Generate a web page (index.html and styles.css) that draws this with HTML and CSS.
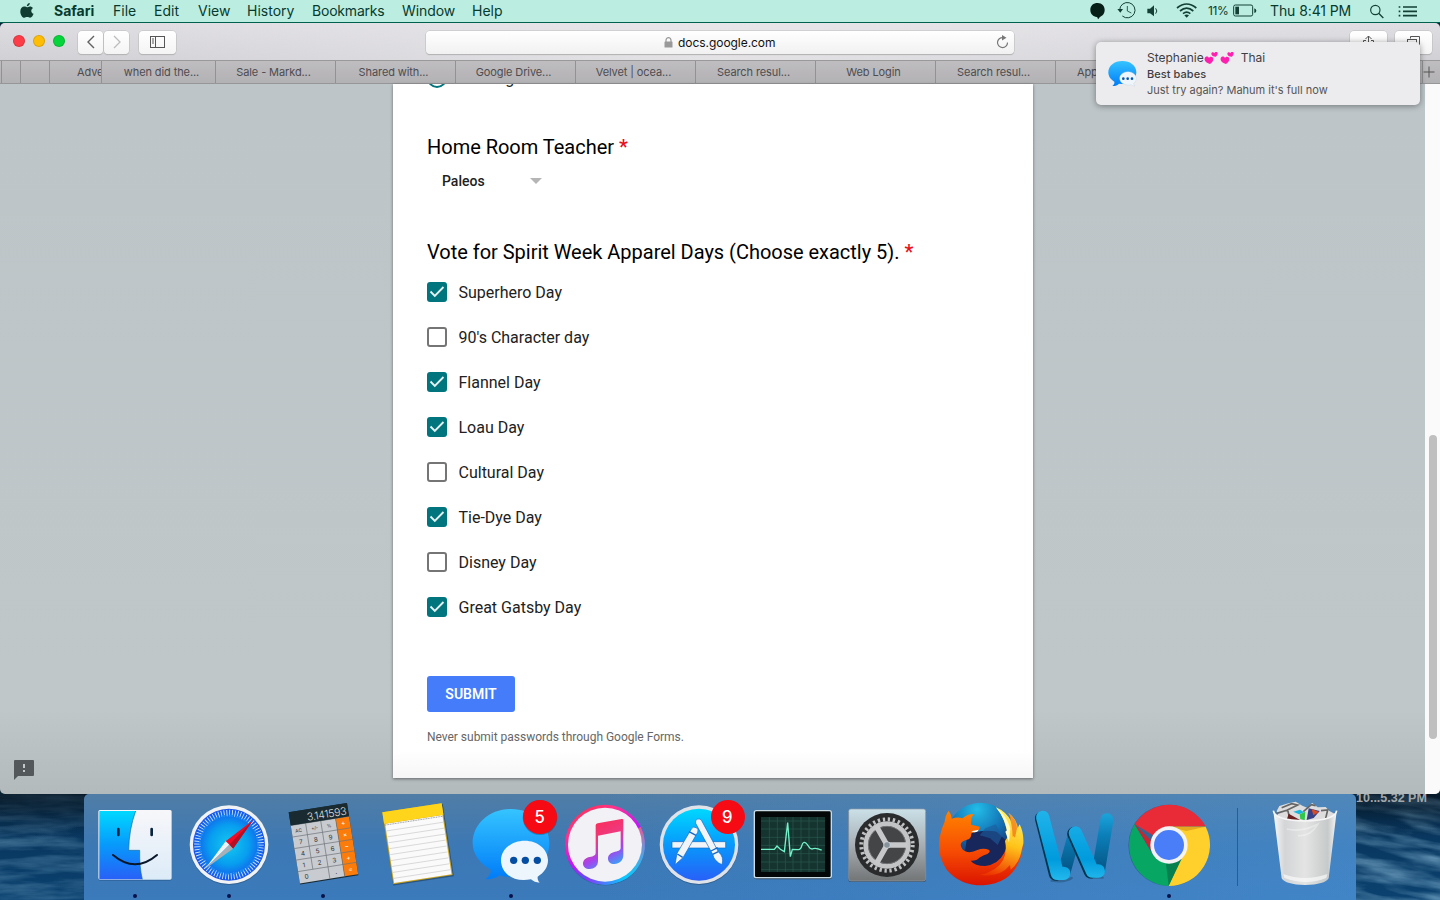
FILE: index.html
```html
<!DOCTYPE html>
<html lang="en">
<head>
<meta charset="utf-8">
<title>Desktop</title>
<link rel="stylesheet" href="styles.css">
</head>
<body>
<header class="menubar">
  <svg class="apple" width="14" height="18" viewBox="0 0 14 18"><path d="M9.8 1c.1 1.600-1.300 3.300-3 3.300C6.700 2.700 8.200 1.200 9.800 1zM7 5.200c.7 0 1.600-.8 2.900-.8 1.300 0 2.400.6 3.100 1.500-2.500 1.500-2.200 4.900.6 5.900-.6 1.700-2 4-3.500 4-1.100 0-1.500-.7-2.900-.7s-1.800.7-2.900.7C2.300 15.800.3 12.500.3 9.400c0-3.200 2-4.900 4-4.900 1.300 0 2 .7 2.700.7z"/></svg>
  <nav class="menus">
    <span class="m-safari">Safari</span><span class="m-file">File</span><span class="m-edit">Edit</span><span class="m-view">View</span><span class="m-history">History</span><span class="m-bookmarks">Bookmarks</span><span class="m-window">Window</span><span class="m-help">Help</span>
  </nav>
  <div class="status">
    <svg class="status-icons" width="120" height="22" viewBox="0 0 360 66">
      <path fill="#061f17" d="M47 9c13 0 21 9 21 21 0 11-7 18-13 20-3 2-4 5-7 8-1-3-1-6-4-7-10-2-19-8-19-21S34 9 47 9z"/>
      <g fill="none" stroke="#143f34" stroke-width="3"><path d="M113 30a23 23 0 1 1 8 18"/><path d="M136 18v15l12 6" stroke-width="2.500"/></g>
      <path fill="#143f34" d="M106 27h17l-8 11zM196 26h8l12-10v33l-12-9h-8z"/>
      <path fill="none" stroke="#143f34" stroke-width="3" d="M221 25q7 8 0 16"/>
      <g fill="none" stroke="#143f34" stroke-width="5"><path d="M285 24q29-24 58 0M294 33q20-17 40 0M303 41q11-9 22 0"/></g><path fill="#143f34" d="M307 46q7-5 14 0l-7 7z"/>
    </svg>
    <span class="percent">11%</span>
    <svg width="24" height="14" viewBox="0 0 72 42"><rect x="2" y="3" width="57" height="33" rx="5" fill="none" stroke="#143f34" stroke-width="3"/><rect x="7" y="8" width="11" height="23" fill="#143f34"/><path d="M64 13q6 2 6 7t-6 7z" fill="#143f34"/></svg>
    <span class="clock">Thu 8:41 PM</span>
    <svg class="tail" width="52" height="20" viewBox="0 0 156 60" fill="none" stroke="#143f34" stroke-width="3.500"><circle cx="19" cy="27" r="14"/><path d="M29 37l14 14" stroke-width="4"/><path d="M102 18h42M102 31h42M102 44h42" stroke-width="5"/><path d="M89 18h5M89 31h5M89 44h5" stroke-width="5"/></svg>
  </div>
</header>

<section class="window">
  <div class="toolbar">
    <i class="light red"></i><i class="light yellow"></i><i class="light green"></i>
    <div class="nav">
      <b><svg width="10" height="14" viewBox="0 0 10 14"><path d="M8 1L2 7l6 6" fill="none" stroke="#606060" stroke-width="1.400"/></svg></b>
      <b><svg width="10" height="14" viewBox="0 0 10 14"><path d="M2 1l6 6-6 6" fill="none" stroke="#bcbcbc" stroke-width="1.300"/></svg></b>
    </div>
    <div class="btn sidebar"><svg width="16" height="13" viewBox="0 0 16 13" fill="none" stroke="#565656"><rect x=".5" y=".5" width="14" height="11"/><path d="M5.500.5v11M2 3h2M2 5h2M2 7h2"/></svg></div>
    <div class="address">
      <svg class="lock" width="9" height="11" viewBox="0 0 9 11"><rect x=".5" y="4.500" width="8" height="6" rx=".6" fill="#999"/><path d="M2 5V3.200a2.500 2.500 0 0 1 5 0V5" fill="none" stroke="#999" stroke-width="1.200"/></svg>
      <span>docs.google.com</span>
      <svg class="reload" width="13" height="14" viewBox="0 0 13 14"><path d="M7 2.600a5 5 0 1 0 4.500 4.900" fill="none" stroke="#777" stroke-width="1.200"/><path d="M6 0l4.500 2.700L6 5.500z" fill="#777"/></svg>
    </div>
    <div class="btn share"><svg width="14" height="15" viewBox="0 0 14 15" fill="none" stroke="#555"><path d="M4 5.500H1.500v9h10v-9H9M6.500 10V1M3.500 4l3-3 3 3"/></svg></div>
    <div class="btn all-tabs"><svg width="14" height="12" viewBox="0 0 14 12" fill="none" stroke="#555"><path d="M3.500 2.500v-2h9v8h-2"/><rect x=".5" y="3.500" width="9" height="8"/></svg></div>
  </div>
  <div class="tabs">
    <span class="t0"></span><span class="t1"></span><span class="t2"></span><span class="t3">Adve</span><span class="t4">when did the...</span><span>Sale - Markd...</span><span>Shared with...</span><span>Google Drive...</span><span>Velvet | ocea...</span><span>Search resul...</span><span>Web Login</span><span>Search resul...</span><span class="last">App</span><span class="plus"><svg width="12" height="12" viewBox="0 0 12 12"><path d="M6 .5v11M.5 6h11" stroke="#555" stroke-width="1"/></svg></span>
  </div>
  <main class="page">
    <div class="left">
      <svg width="20" height="20" viewBox="0 0 20 20"><path d="M1 0h18q1 0 1 1v14q0 1-1 1H4l-4 4V1q0-1 1-1z" fill="#53585a"/><path d="M9 4h2v4H9zm0 6h2v2H9z" fill="#c2c8ca"/></svg>
    </div>
    <form class="card">
      <div class="clipped"><svg width="20" height="20" viewBox="0 0 20 20"><circle cx="10" cy="10" r="9" fill="none" stroke="#00757d" stroke-width="2"/></svg><span>Although</span></div>
      <h2 class="q1">Home Room Teacher <em>*</em></h2>
      <div class="select">Paleos<i></i></div>
      <h2 class="q2">Vote for Spirit Week Apparel Days (Choose exactly 5). <em>*</em></h2>
      <div class="options">
        <label><i class="box on"><svg width="20" height="20" viewBox="0 0 20 20"><path d="M3.500 9.500l4.300 4.500L16.500 5" fill="none" stroke="#e4f1f2" stroke-width="1.900"/></svg></i><span>Superhero Day</span></label>
        <label><i class="box"></i><span>90's Character day</span></label>
        <label><i class="box on"><svg width="20" height="20" viewBox="0 0 20 20"><path d="M3.500 9.500l4.300 4.500L16.500 5" fill="none" stroke="#e4f1f2" stroke-width="1.900"/></svg></i><span>Flannel Day</span></label>
        <label><i class="box on"><svg width="20" height="20" viewBox="0 0 20 20"><path d="M3.500 9.500l4.300 4.500L16.500 5" fill="none" stroke="#e4f1f2" stroke-width="1.900"/></svg></i><span>Loau Day</span></label>
        <label><i class="box"></i><span>Cultural Day</span></label>
        <label><i class="box on"><svg width="20" height="20" viewBox="0 0 20 20"><path d="M3.500 9.500l4.300 4.500L16.500 5" fill="none" stroke="#e4f1f2" stroke-width="1.900"/></svg></i><span>Tie-Dye Day</span></label>
        <label><i class="box"></i><span>Disney Day</span></label>
        <label><i class="box on"><svg width="20" height="20" viewBox="0 0 20 20"><path d="M3.500 9.500l4.300 4.500L16.500 5" fill="none" stroke="#e4f1f2" stroke-width="1.900"/></svg></i><span>Great Gatsby Day</span></label>
      </div>
      <button type="button" class="submit">SUBMIT</button>
      <p class="note">Never submit passwords through Google Forms.</p>
    </form>
    <div class="scroll"><i></i></div>
  </main>
</section>

<aside class="toast">
  <svg class="toast-icon" width="30" height="28" viewBox="0 0 90 84">
    <defs><linearGradient id="msg" x1="0" y1="0" x2="0" y2="1"><stop offset="0" stop-color="#35c4ff"/><stop offset="1" stop-color="#007cf8"/></linearGradient></defs>
    <path fill="url(#msg)" d="M43 3c24 0 42 14 42 34S67 72 43 72l-10-1c-5 5-13 8-20 7 5-4 7-8 6-13C8 59 1 49 1 37 1 17 19 3 43 3z"/>
    <path fill="#eef6fc" stroke="#b9cfe0" d="M60 35c14 0 25 9 25 20 0 7-3 12-8 15 0 4 2 7 4 8-4 0-9-1-12-4-20 4-34-6-34-19 0-11 11-20 25-20z"/><g fill="#0a57a8"><circle cx="46" cy="56" r="4"/><circle cx="59" cy="56" r="4"/><circle cx="72" cy="56" r="4"/></g>
  </svg>
  <div class="toast-text">
    <div class="who"><span>Stephanie</span><svg width="31" height="14" viewBox="0 0 93 42"><g id="hearts" fill="#ff1fae"><path d="M18 39C8 36 0 30 2 22c2-7 10-7 13-1 3-6 12-5 13 2 1 6-5 12-10 16z"/><path d="M36 17c-8 0-14-4-14-9 1-5 7-5 9-1 1-5 9-6 10-1 0 4-2 8-5 11z"/></g><use href="#hearts" x="48"/></svg><span class="thai">Thai</span></div>
    <div class="group">Best babes</div>
    <div class="body">Just try again? Mahum it's full now</div>
  </div>
</aside>

<footer class="desktop">
  <svg class="sea" width="1440" height="106" viewBox="0 0 1440 106">
    <defs>
      <filter id="waves" x="0" y="0" width="1" height="1"><feTurbulence type="fractalNoise" baseFrequency=".014 .09" numOctaves="4" seed="8"/><feColorMatrix values="0 0 0 0 .25  0 0 0 0 .48  0 0 0 0 .67  1.700 0 0 0 -.6"/></filter>
      <linearGradient id="deep" x1="0" y1="0" x2="0" y2="1"><stop offset="0" stop-color="#0a2438"/><stop offset=".25" stop-color="#08345a"/><stop offset="1" stop-color="#0b4270"/></linearGradient>
      <linearGradient id="shade" x1="0" y1="0" x2="0" y2="1"><stop offset="0" stop-color="#041422" stop-opacity=".7"/><stop offset=".4" stop-color="#041422" stop-opacity="0"/></linearGradient>
    </defs>
    <rect width="1440" height="106" fill="url(#deep)"/><rect width="84" height="106" filter="url(#waves)" opacity=".5"/><g transform="rotate(9 1400 50)"><rect x="1340" y="-25" width="130" height="165" filter="url(#waves)" opacity=".8"/></g><rect width="1440" height="106" fill="url(#shade)"/>
  </svg>
  <span class="filename">10...5.32 PM</span>
  <div class="dock">
    <svg viewBox="24 27 282 318"><defs><linearGradient id="f1" x1="0" y1="0" x2="0" y2="1"><stop offset="0" stop-color="#00d8ff"/><stop offset=".5" stop-color="#0799fb"/><stop offset="1" stop-color="#2860f7"/></linearGradient><linearGradient id="f2" x1="0" y1="0" x2="0" y2="1"><stop offset="0" stop-color="#f7f7fa"/><stop offset="1" stop-color="#dcebf8"/></linearGradient></defs>
      <rect x="55" y="78" width="220" height="209" rx="6" fill="#234d76" opacity=".5"/><rect x="55" y="75" width="220" height="209" rx="5" fill="url(#f2)"/><path fill="url(#f1)" d="M58 78H167Q147 133 146 196H179Q178 246 187 283H58z"/><path d="M167 78Q147 133 146 196H179Q178 246 187 283" fill="none" stroke="#176ba5" stroke-width="2"/><path d="M115 132v18M215 132v18" stroke="#07233d" stroke-width="8" stroke-linecap="round"/><path d="M99 210q66 56 132 0" fill="none" stroke="#08172a" stroke-width="6" stroke-linecap="round"/><circle cx="165" cy="333" r="6" fill="#08114a"/></svg>
    <svg viewBox="306 27 282 318"><defs><radialGradient id="s1"><stop offset="0" stop-color="#14c8ef"/><stop offset=".55" stop-color="#079eef"/><stop offset="1" stop-color="#1752ec"/></radialGradient></defs>
      <circle cx="447" cy="182" r="118" fill="#254c73" opacity=".5"/><circle cx="447" cy="179" r="118" fill="#f1f2f3"/><circle cx="447" cy="179" r="108" fill="url(#s1)"/><circle cx="447" cy="179" r="95" fill="none" stroke="#cfeaff" stroke-width="19" stroke-dasharray="2.500 5.790"/><circle cx="447" cy="179" r="87" fill="none" stroke="#1687ee" stroke-width="5" stroke-dasharray="11 11.780"/>
      <path fill="#f00c24" d="M519 106l-82 63 11 10 11 12z"/><path fill="#b80e25" d="M519 106l-71 73 11 12z"/><path fill="#f0f1f4" d="M375 252l62-83 11 10z"/><path fill="#a9afb6" d="M375 252l73-73 11 12z"/><circle cx="447" cy="333" r="6" fill="#08114a"/></svg>
    <svg viewBox="588 27 282 318"><g transform="translate(626 82) rotate(-9)"><path d="M0 0h177v219H0z" fill="#172a35"/><path d="M0 40h136v176H0z" fill="#c8cbd0"/><path d="M136 40h41v176h-41z" fill="#fb7c0a"/><path d="M0 40h177M0 75h177M0 110h177M0 145h177M0 180h177M45 40v140M91 40v176M136 40v176" stroke="#6e747a" stroke-width="2"/><path d="M0 0h177v40H0z" fill="#192b31"/><g class="keys"><text x="171" y="34" class="pi">3.141593</text><text x="11" y="64" class="ac">AC</text><text x="59" y="64" class="ac">+/-</text><text x="106" y="64" class="ac">%</text><text x="17" y="100">7</text><text x="62" y="100">8</text><text x="107" y="100">9</text><text x="17" y="135">4</text><text x="62" y="135">5</text><text x="107" y="135">6</text><text x="17" y="170">1</text><text x="62" y="170">2</text><text x="107" y="170">3</text><text x="17" y="205">0</text><text x="110" y="205">.</text><g fill="#fff"><text x="150" y="64">÷</text><text x="150" y="99">×</text><text x="150" y="134">−</text><text x="150" y="169">+</text><text x="150" y="204">=</text></g></g></g><circle cx="729" cy="333" r="6" fill="#08114a"/></svg>
    <svg viewBox="0 27 282 318"><g transform="translate(37 82) rotate(-8.700)"><path d="M2 3h181v219H-1z" fill="#233c55" opacity=".6"/><path d="M0 0h180v218H0z" fill="#c9a526"/><path d="M3 35h174v180H3z" fill="#fafafa"/><path d="M0 0h180v35H0z" fill="#ffd51b"/><path d="M2 39h176" stroke="#777" stroke-width="2" stroke-dasharray="3 2"/><path d="M4 57h172M4 75h172M4 93h172M4 111h172M4 129h172M4 147h172M4 165h172M4 183h172M4 201h172" stroke="#cacaca" stroke-width="2"/></g></svg>
    <svg viewBox="282 27 282 318"><path fill="url(#msg)" d="M423 72c65 0 115 45 115 102s-50 102-115 102c-13 0-25-2-35-5-11 9-24 13-41 11 11-9 18-18 14-29-32-17-53-47-53-79 0-57 50-102 115-102z"/><path fill="#edf6fc" d="M464 167c39 0 70 26 70 59 0 20-12 38-31 49-1 8 2 13 6 18-10 0-20-4-26-10-53 11-90-18-90-57 0-33 32-59 71-59z"/><g fill="#034da2"><circle cx="431" cy="226" r="11"/><circle cx="466" cy="226" r="11"/><circle cx="502" cy="226" r="11"/></g><circle cx="510" cy="98" r="52" fill="#18324e" opacity=".35"/><circle cx="510" cy="96" r="51" fill="#f60a13"/><text x="509" y="115" class="badge">5</text><circle cx="423" cy="333" r="6" fill="#08114a"/></svg>
    <svg viewBox="564 27 282 318"><defs><linearGradient id="i1" x1=".1" y1="0" x2=".7" y2="1"><stop offset="0" stop-color="#ff3040"/><stop offset=".25" stop-color="#ff328b"/><stop offset=".55" stop-color="#c714fc"/><stop offset=".78" stop-color="#455bf5"/><stop offset="1" stop-color="#03cfff"/></linearGradient><linearGradient id="i2" x1=".3" y1="0" x2=".7" y2="1"><stop offset="0" stop-color="#fc2c54"/><stop offset=".4" stop-color="#ee397f"/><stop offset=".7" stop-color="#a544ed"/><stop offset="1" stop-color="#2dabfa"/></linearGradient><linearGradient id="i4" x1="0" y1="0" x2="0" y2="1"><stop offset="0" stop-color="#e85b90"/><stop offset=".35" stop-color="#7c8fd0"/><stop offset="1" stop-color="#05caff"/></linearGradient><linearGradient id="i5" x1="0" y1="0" x2="1" y2="0"><stop offset="0" stop-color="#8a35fa"/><stop offset="1" stop-color="#05caff"/></linearGradient></defs><circle cx="705" cy="182" r="119" fill="#284a6e" opacity=".5"/><circle cx="705" cy="179" r="120" fill="url(#i1)"/><path d="M808 128A115 115 0 0 1 762 279" fill="none" stroke="url(#i4)" stroke-width="10"/><path d="M763 278A115 115 0 0 1 648 279" fill="none" stroke="url(#i5)" stroke-width="10"/><circle cx="705" cy="179" r="111" fill="#f2f1f5"/><path fill="url(#i2)" d="M677 121q0-5 6-6l72-13q5-1 5 4v104c0 16-12 27-27 27-12 0-19-7-19-16 0-12 9-18 21-21 13-3 17-5 17-12v-49l-68 13v76c0 16-12 24-25 24-12 0-20-7-20-16 0-11 9-18 20-20 12-2 18-5 18-12z"/></svg>
    <svg viewBox="6 27 282 318"><circle cx="147" cy="182" r="118" fill="#25486c" opacity=".5"/><circle cx="147" cy="179" r="118" fill="#dfe3e9"/><circle cx="147" cy="179" r="108" fill="url(#f1)"/><g fill="#f2f5f8" stroke="#1468c5" stroke-width="2"><path d="M66 170h161v19H66z"/><path d="M124 132q5-9 15-4 8 5 4 14l-44 76-24 21 6-34z"/><path d="M137 115q-3-10 6-13 8-2 12 5l50 93q18 16 11 39-23-9-28-31z"/><path d="M117 140l21 11M82 207l16 10M183 198l20-10M188 208l17-8" fill="none" stroke-width="4"/></g><circle cx="234" cy="96" r="51" fill="#f60a13"/><text x="232" y="115" class="badge">9</text></svg>
    <svg viewBox="288 27 282 318"><rect x="312" y="77" width="234" height="206" rx="7" fill="#354b60"/><rect x="313" y="77" width="231" height="201" rx="6" fill="#030707" stroke="#cbdce5" stroke-width="4"/><rect x="333" y="96" width="192" height="165" fill="#15332f"/><path d="M358 96v165M382 96v165M406 96v165M429 96v165M453 96v165M477 96v165M502 96v165M333 108h192M333 132h192M333 157h192M333 181h192M333 206h192M333 231h192M333 254h192" stroke="#29594f" stroke-width="2"/><path d="M333 193h40l8-10 10 10 12 7 10-87 8 102 6-22 18 1c14-1 7-20 17-22 14-1 12 26 28 19 9-4 13 2 25 4" fill="none" stroke="#72f2c8" stroke-width="4"/></svg>
    <svg viewBox="570 27 282 318"><defs><linearGradient id="p1" x1="0" y1="0" x2="0" y2="1"><stop offset="0" stop-color="#cbe0e8"/><stop offset=".5" stop-color="#a8afb4"/><stop offset="1" stop-color="#737576"/></linearGradient></defs><rect x="595" y="75" width="233" height="216" rx="7" fill="#344f6b"/><rect x="596" y="72" width="231" height="216" rx="7" fill="url(#p1)" stroke="#909da7" stroke-width="2"/><circle cx="711" cy="180" r="96" fill="#292b2d"/><circle cx="711" cy="180" r="77" fill="none" stroke="#bfc1c2" stroke-width="12" stroke-dasharray="7 8.120"/><circle cx="711" cy="180" r="64" fill="#444547" stroke="#c2c4c5" stroke-width="14"/><circle cx="711" cy="180" r="56" fill="none" stroke="#858789" stroke-width="2"/><path d="M711 180h62M711 180l-33-58M711 180l-33 58" stroke="#c6c8c9" stroke-width="16"/><circle cx="711" cy="180" r="10" fill="#87939c" stroke="#e0e2e3" stroke-width="2"/></svg>
    <svg viewBox="12 27 282 318"><defs><radialGradient id="x1" cx=".45" cy=".1" r=".8"><stop offset="0" stop-color="#22bde9"/><stop offset=".55" stop-color="#126db0"/><stop offset="1" stop-color="#18245c"/></radialGradient><linearGradient id="x2" x1=".5" y1="0" x2=".5" y2="1"><stop offset="0" stop-color="#ff8300"/><stop offset=".55" stop-color="#f64b03"/><stop offset="1" stop-color="#db1301"/></linearGradient><linearGradient id="x3" x1=".5" y1="0" x2=".3" y2="1"><stop offset="0" stop-color="#fff46a"/><stop offset=".5" stop-color="#ffc31a"/><stop offset="1" stop-color="#ed3500"/></linearGradient></defs>
    <circle cx="151" cy="153" r="100" fill="url(#x1)"/><path fill="#17265b" d="M112 150Q155 132 200 140L232 170Q236 215 200 240Q140 255 105 200z"/><path fill="#1c5c9b" opacity=".6" d="M166 130l31-12 19 36-13 26-23-20-31-9z"/>
    <path fill="url(#x2)" d="M44 110Q46 90 56 77Q64 88 65 101Q82 95 98 100Q111 87 131 87Q121 101 124 119L149 125Q150 135 138 140L124 145Q124 158 116 163Q92 168 92 180Q94 196 112 201Q128 203 142 195Q160 188 176 194Q184 200 172 207Q160 210 148 218Q140 228 122 227Q134 243 166 243Q205 238 222 205Q238 175 232 120Q258 140 264 172L274 148Q286 190 266 232Q240 295 160 301Q90 302 50 254Q12 200 36 130z"/>
    <path fill="url(#x3)" d="M198 67Q228 80 243 108Q242 92 235 83Q260 102 263 129L269 118Q282 144 280 176L276 190Q270 232 242 254L240 240Q210 278 150 270Q202 258 219 226Q232 200 225 168L233 156Q229 105 198 67z"/><path fill="#fffbc3" d="M198 67Q230 92 241 130L237 172L226 140L231 136Q224 98 198 67z"/><path fill="#f05a08" opacity=".6" d="M235 84Q262 104 261 130L255 158Q250 150 248 156Q247 118 235 84z"/><path fill="#fff" d="M124 139l22-5q-5 12-22 5z"/></svg>
    <svg viewBox="294 27 282 318"><defs><linearGradient id="w1" gradientUnits="userSpaceOnUse" x1="0" y1="75" x2="0" y2="287"><stop offset="0" stop-color="#20b4ea"/><stop offset=".7" stop-color="#009bdd"/><stop offset="1" stop-color="#24b9ed"/></linearGradient><linearGradient id="w2" gradientUnits="userSpaceOnUse" x1="0" y1="85" x2="0" y2="270"><stop offset="0" stop-color="#1ba4da"/><stop offset=".35" stop-color="#0c7fb9"/><stop offset="1" stop-color="#03507f"/></linearGradient></defs><g fill="none" stroke-linecap="round" stroke-linejoin="round"><path d="M365 287q40 6 60-8M478 278h40" stroke="#234d72" stroke-width="7" opacity=".5"/><path d="M402 262L434 146M506 253L531 104" stroke="url(#w2)" stroke-width="39"/><path d="M335 100L377 267M432 146L482 260" stroke="#07354f" stroke-width="41"/><path d="M338 97L382 265H401M436 144L487 258H505" stroke="url(#w1)" stroke-width="40"/></g></svg>
    <svg viewBox="576 27 282 318"><circle cx="717" cy="181" r="122" fill="#24486c" opacity=".5"/><path fill="#e82b36" d="M717 180L614 118a123 123 0 0 1 213 6l-110 1z"/><path fill="#ffd02c" d="M717 125h110a123 123 0 0 1-112 178l45-100z"/><path fill="#08a663" d="M614 118l55 93 83 13-37 79a123 123 0 0 1-101-185z"/><path fill="#e4a91e" d="M717 125h110l-58 13z"/><path fill="#078050" d="M755 221l-39 82-8-67z"/><path fill="#c52632" d="M614 118l48 78 5-26z"/><circle cx="717" cy="180" r="56" fill="#f3f3f5"/><circle cx="717" cy="180" r="45" fill="#4a7df8"/><circle cx="717" cy="333" r="6" fill="#08114a"/></svg>
    <i class="separator"></i>
    <svg class="trash" viewBox="174 162 282 318"><defs><linearGradient id="b1"><stop offset="0" stop-color="#f8f8f8"/><stop offset=".18" stop-color="#d3d5d7"/><stop offset=".5" stop-color="#e4e4e4"/><stop offset=".86" stop-color="#c7caca"/><stop offset="1" stop-color="#f5f5f5"/></linearGradient></defs><path fill="#ddd" d="M230 213l8-15 27-8 22-5 20 12 16 7 13-16 17 14 24-1 10 11 22 12-18 24H240z"/><path d="M245 203l30-12 18 4-31 15M310 215l24-21 13 3M363 212l20-2-6 25M230 220l33-10 5 20" stroke="#666" stroke-width="5" fill="none"/><path fill="#17b5d9" d="M280 215l20-6 12 8-15 6z"/><path fill="#31c749" d="M299 223l17-8-2 26-13-4z"/><path fill="#374187" d="M326 205l33 8-18 21-21 6z"/><path fill="#db4c25" d="M335 207l22 9-17 10z"/><path fill="#6b2020" d="M266 221l34 19h-40z"/><path fill="url(#b1)" d="M220 214q13 28 95 29 80-1 95-29l-24 201q-11 19-71 20-59-1-70-20z"/><path d="M220 212q4 29 95 31 91-2 95-31" fill="none" stroke="#f6f6f6" stroke-width="5"/><path d="M260 267q45 11 93-14-22 37-59 34" stroke="#fff" opacity=".35" stroke-width="5" fill="none"/><path d="M250 402q64 24 132 0l-3 12q-60 24-126 0z" fill="#fff" opacity=".6"/></svg>
  </div>
</footer>
</body>
</html>
```

FILE: styles.css
```css
*{box-sizing:border-box}
body{margin:0;width:1440px;height:900px;overflow:hidden;display:flex;flex-direction:column;position:relative;font-family:Inter,"Liberation Sans",sans-serif;background:#0a2438}
svg{display:block;flex:none}
i{font-style:normal}
.menubar{height:23px;flex:none;display:flex;align-items:center;padding-left:20px;background:#bbeee1;border-bottom:1px solid #00614d;color:#073a2f;font-size:14px;line-height:22px;white-space:nowrap}
.apple{fill:#103c31}
.menus{display:flex;padding-left:20px;flex:none}
.menus span{flex:none}
.m-safari{width:59px;font-weight:700}
.m-file{width:41px}
.m-edit{width:44px}
.m-view{width:49px}
.m-history{width:65px}
.m-bookmarks{width:90px;letter-spacing:-.2px}
.m-window{width:70px;letter-spacing:-.1px}
.m-help{width:40px}
.status{display:flex;align-items:center;margin-left:auto;height:22px;width:358px}
.percent{width:25px;margin-left:6px;font-size:12px;letter-spacing:-.4px}
.clock{width:110px;padding-left:13px;letter-spacing:-.1px}
.tail{margin-left:2px}
.window{height:771px;flex:none;display:flex;flex-direction:column;border-radius:5px;overflow:hidden}
.toolbar{height:37px;flex:none;display:flex;align-items:center;padding:1px 7px 0 13px;background:linear-gradient(90deg,rgba(210,209,215,.4),rgba(232,230,233,.8) 50%,rgba(210,209,215,.3)),linear-gradient(#e5e3e7,#d0d0d4)}
.light{width:12px;height:12px;border-radius:50%;margin-right:8px;border:1px solid #0002;margin-top:-2px}
.red{background:#fc3d48}.yellow{background:#ffbd05}.green{background:#06d43b}
.nav{display:flex;gap:1px;margin-left:5px}
.nav b,.btn{height:23px;border-radius:4px;background:linear-gradient(#fff,#f4f4f4);box-shadow:0 0 0 .5px #bbb,0 1px 1px #aaa;display:flex;align-items:center;justify-content:center}
.nav b{width:25px}
.btn{width:37px}
.sidebar{margin-left:10px}
.address{width:588px;height:23px;margin-left:250px;border-radius:4px;background:linear-gradient(#fff,#f1f1f1);box-shadow:0 0 0 .5px #bbb,0 1px 1px #aaa;display:flex;align-items:center;padding:0 5px 0 238px;font-size:12px;line-height:24px;letter-spacing:-.05px;color:#111}
.address span{margin-left:5px;padding-top:1px}
.reload{margin-left:auto}
.share{margin-left:336px}
.all-tabs{margin-left:8px}
.tabs{height:24px;flex:none;display:flex;background:linear-gradient(#bfbdc0,#b2b1b4);border-top:1px solid #999;border-bottom:1px solid #969698;color:#4e4c50;font-size:11px;letter-spacing:-.1px;line-height:22px;white-space:nowrap}
.tabs span{width:120px;flex:none;text-align:center;border-right:1px solid #929194;overflow:hidden;padding-right:4px}
.tabs .t0{width:2px;padding:0}
.tabs .t1{width:19px}
.tabs .t2{width:29px}
.tabs .t3{width:52px;padding:0 0 0 27px;text-align:left}
.tabs .t4{width:114px;padding:0 0 0 6px}
.tabs .last{width:367px;text-align:left;padding-left:21px}
.tabs .plus{width:17px;padding:5px 0 0 0;border:0}
.page{height:710px;display:flex;background:linear-gradient(#bdc5c8,#c0c7c9 88%,#b3babc)}
.left{width:393px;flex:none;padding:676px 0 0 14px}
.card{width:640px;height:694px;flex:none;background:linear-gradient(#fff 96%,#f6f6f6);box-shadow:0 1px 3px #0007;padding-left:34px;font-family:Roboto,sans-serif;color:#212121}
.clipped{height:4px;overflow:hidden;display:flex;align-items:flex-end;font-size:16px;line-height:16px}
.clipped span{margin-left:12px;margin-bottom:1px}
.card h2{margin:0;font-size:20px;font-weight:400;line-height:26px;letter-spacing:-.02px;color:#000;white-space:nowrap}
.card em{font-style:normal;font-weight:500;color:#e8101c}
.q1{padding-top:46px}
.select{height:22px;margin-top:10px;padding-left:15px;display:flex;align-items:center;font-size:14px;font-weight:500}
.select i{margin-left:45px;border:6px solid transparent;border-top-color:#b5b5b5;border-bottom:0}
.card .q2{margin-top:47px}
.options{padding-top:17px}
.options label{display:flex;height:20px;margin-bottom:25px;align-items:center;font-size:16px;line-height:20px}
.options label span{padding-top:2px}
.box{width:20px;height:20px;border:2px solid #757575;border-radius:3px;margin-right:11.500px}
.box.on{border:0;background:#00757d}
.submit{display:block;width:88px;height:36px;margin:59px 0 0;border:0;border-radius:3px;background:#447cfa;color:#fff;font:600 14px Roboto,sans-serif;padding:0}
.note{margin:16px 0 0;font-size:12px;line-height:18px;letter-spacing:-.02px;color:#666}
.scroll{width:15px;margin-left:auto;background:#fafafa;padding:351px 3px 0 4px}
.scroll i{display:block;width:8px;height:304px;border-radius:4px;background:#bfbfbf}
.toast{position:absolute;left:1096px;top:42px;width:324px;height:63px;border-radius:5px;background:#ecebed;box-shadow:0 1px 6px #0006;display:flex;align-items:center;padding-left:12px;color:#3f3f43}
.toast-text{padding-left:9px;font-size:12px;line-height:16px;white-space:nowrap}
.who{display:flex;align-items:center}
.thai{margin-left:6px}
.group{font-size:11px;font-weight:500;letter-spacing:.05px}
.body{font-size:11px;color:#555}
.desktop{height:106px;flex:none;position:relative;display:flex;padding-left:84px}
.sea{position:absolute;left:0;top:0}
.filename{position:absolute;left:1356px;top:-3px;width:76px;font:700 12.500px/14px "Liberation Sans",sans-serif;color:#a3a7aa;white-space:nowrap;clip-path:inset(3px 0 0 0)}
.dock{position:relative;width:1272px;height:106px;border-radius:5px 5px 0 0;background:linear-gradient(90deg,#4a9be000 40%,#4f9be055),linear-gradient(#507da6,#3c78b4 50%,#3b7abb);display:flex;padding-left:4px}
.dock svg{width:94px;height:106px}
.separator{width:1px;height:78px;margin:14px 20px 0 21px;background:#285f91}
.badge{font:500 50px Inter,sans-serif;fill:#fff;text-anchor:middle}
.keys{font:19px Inter,sans-serif;fill:#333}
.keys .pi{font-size:32px;font-weight:300;fill:#ddd;text-anchor:end;letter-spacing:-1px}
.keys .ac{font-size:14px}
```
